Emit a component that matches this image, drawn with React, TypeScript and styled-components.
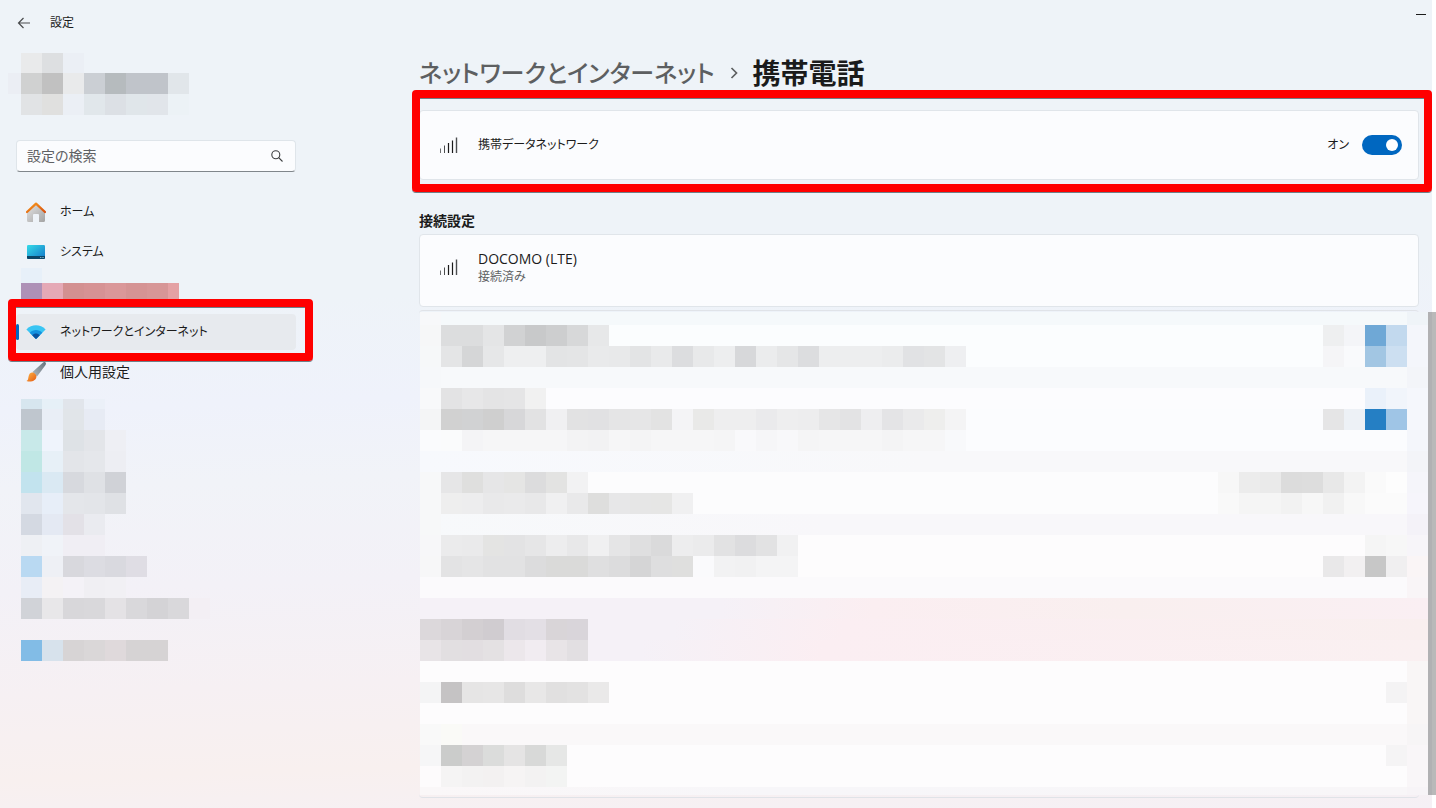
import React from "react";
import styled, { createGlobalStyle } from "styled-components";

const GlobalStyle = createGlobalStyle`
  *, *::before, *::after { box-sizing: border-box; }
  body {
    margin: 0;
    background: #ffffff;
    color: #1b1b1b;
    font-family: "Open Sans", "Noto Sans CJK JP", sans-serif;
    font-size: 14px;
    line-height: 20px;
    font-feature-settings: "palt";
  }
  button, input { font: inherit; color: inherit; font-feature-settings: inherit; }
`;

const Page = styled.div`
  position: relative;
  min-height: 100vh;
  padding-right: 4px;
`;

const Window = styled.div`
  min-height: 100vh;
  display: flex;
  flex-direction: column;
  background: linear-gradient(
    178deg,
    #eef3f8 0%,
    #eef3f8 36%,
    #eff2fb 48%,
    #f1f3f8 57%,
    #f3f1f7 69%,
    #f6f0f3 81%,
    #f8f0ef 91%,
    #f5f0f5 100%
  );
`;

const TitleBar = styled.header`
  display: flex;
  align-items: center;
  height: 46px;
  padding: 0 6px 0 16px;
  font-size: 12px;
`;

const BareButton = styled.button`
  display: flex;
  align-items: center;
  justify-content: center;
  padding: 0;
  border: 0;
  background: none;
`;

const BackButton = styled(BareButton)`
  width: 16px;
  height: 16px;
  margin-right: 18px;
`;

const MinimizeButton = styled(BareButton)`
  align-self: flex-start;
  width: 10px;
  height: 28px;
  margin-left: auto;
`;

const Columns = styled.div`
  flex: 1;
  display: grid;
  grid-template-columns: 403px minmax(0, 1fr);
  padding-left: 16px;
`;

const Sidebar = styled.aside`
  width: 280px;
  padding-top: 7px;
`;

const SearchBox = styled.label`
  display: flex;
  align-items: center;
  height: 32px;
  margin: 25px 0 22px;
  padding: 0 12px 0 10px;
  border: 1px solid #dfe5ea;
  border-bottom-color: #80868b;
  border-radius: 4px;
  background: #fbfcfe;
`;

const SearchInput = styled.input`
  flex: 1;
  min-width: 0;
  padding: 0;
  border: 0;
  outline: 0;
  background: none;
  &::placeholder { color: #5f6164; opacity: 1; }
`;

const NavList = styled.nav`
  display: flex;
  flex-direction: column;
  gap: 4px;
`;

const NavSlot = styled.div`
  position: relative;
`;

const NavLink = styled.a<{ $active?: boolean; $kana?: boolean }>`
  position: relative;
  display: flex;
  align-items: center;
  gap: 14px;
  height: 36px;
  padding-left: 10px;
  border-radius: 4px;
  background: ${(p) => (p.$active ? "#e7eaee" : "transparent")};
  color: inherit;
  font-size: ${(p) => (p.$kana ? 12 : 14)}px;
  line-height: ${(p) => (p.$kana ? 22 : 20)}px;
  text-decoration: none;
  &::before {
    content: "";
    display: ${(p) => (p.$active ? "block" : "none")};
    position: absolute;
    left: 0;
    top: 10px;
    width: 3px;
    height: 16px;
    border-radius: 2px;
    background: #0067c0;
  }
`;

const Highlight = styled.div<{ $inset: string }>`
  position: absolute;
  inset: ${(p) => p.$inset};
  border: 8px solid #ff0000;
  border-radius: 4px;
  box-shadow: inset 0 1px 0 #6f7f88, 0 1px 0 #6f7f88;
  pointer-events: none;
`;

const Main = styled.main`
  padding: 10px 13px 10px 0;
`;

const Breadcrumb = styled.h1`
  display: flex;
  align-items: center;
  gap: 15px;
  height: 34px;
  margin: 0 0 20px;
  font-size: 28px;
  line-height: 34px;
  font-weight: 700;
  white-space: nowrap;
`;

const ParentLink = styled.a`
  color: #5d5f61;
  font-size: 24px;
  font-weight: 500;
  text-decoration: none;
`;

const CardWrap = styled.div`
  position: relative;
`;

const Card = styled.section<{ $height: number; $raised?: boolean }>`
  display: flex;
  align-items: center;
  gap: 20px;
  min-height: ${(p) => p.$height}px;
  padding: 0 16px ${(p) => (p.$raised ? 8 : 0)}px 20px;
  border: 1px solid #e0e5ea;
  border-radius: 4px;
  background: #fbfcfe;
`;

const CardText = styled.div`
  flex: 1;
`;

const CardTitle = styled.div<{ $kana?: boolean }>`
  font-size: ${(p) => (p.$kana ? 12 : 14)}px;
  line-height: 20px;
`;

const CardNote = styled.div`
  color: #616365;
  font-size: 12px;
  line-height: 16px;
`;

const ToggleLabel = styled.label`
  display: flex;
  align-items: center;
  gap: 13px;
  font-size: 12px;
`;

const Toggle = styled.input`
  appearance: none;
  position: relative;
  width: 40px;
  height: 20px;
  margin: 0;
  border-radius: 10px;
  background: #0067c0;
  &::after {
    content: "";
    position: absolute;
    top: 4px;
    right: 4px;
    width: 12px;
    height: 12px;
    border-radius: 50%;
    background: #ffffff;
  }
`;

const SectionTitle = styled.h2`
  margin: 31px 0 3px;
  font-size: 14px;
  line-height: 20px;
  font-weight: 600;
`;

const ListCard = styled.section`
  margin-top: 3px;
  padding: 1px 0 2px 1px;
  border: solid #e0e3e8;
  border-width: 1px 0;
  border-radius: 4px;
`;

const Bleed = styled.div`
  margin-right: -9px;
`;

const MosaicRow = styled.div<{ $height?: number; $fill?: string }>`
  display: flex;
  height: ${(p) => p.$height ?? 21}px;
  background: ${(p) => p.$fill ?? "transparent"};
`;

const Cell = styled.span<{ $color: string; $width?: number }>`
  flex: none;
  width: ${(p) => p.$width ?? 21}px;
  background: ${(p) => (p.$color === "-" ? "transparent" : `#${p.$color}`)};
`;

const Spacer = styled.span`
  flex: 1;
`;

const SideMosaic = styled.div<{ $top?: number; $bottom?: number }>`
  margin: ${(p) => p.$top ?? 0}px 0 ${(p) => p.$bottom ?? 0}px 5px;
`;

const ProfileMosaic = styled.div`
  margin-left: -8px;
`;

const ScrollThumb = styled.div`
  position: absolute;
  top: 312px;
  right: 0;
  bottom: 13px;
  width: 8px;
  background: linear-gradient(90deg, #b1b1b3 4px, #b9b9b9 4px);
`;

type RowData = { h?: number; fill?: string; left?: string; right?: string; edge?: string };

function Cells({ colors }: { colors?: string }) {
  if (!colors) return null;
  return (
    <>
      {colors.split(" ").map((color, i) => (
        <Cell key={i} $color={color} />
      ))}
    </>
  );
}

function SideRows({ rows }: { rows: RowData[] }) {
  return (
    <>
      {rows.map((row, i) => (
        <MosaicRow key={i} $height={row.h}>
          <Cells colors={row.left} />
        </MosaicRow>
      ))}
    </>
  );
}

const profileRows: RowData[] = [
  { h: 20, left: "e9eaeb dddfe1 ebeff5" },
  { left: "d0d1d1 c1c1c1 e9eaeb cbcfd4 b6bbbe c0c4ca c0c4ca e1e6ea" },
  { left: "e1e3e5 e0e0df ebeff5 e1e7eb dce0e5 e0e6ea e1e5ea ecf2f6" },
];

const sidebarRows: RowData[] = [
  { h: 10, left: "d7e6ef e6f0f7 e1e5eb ebf0f8" },
  { left: "bfc6ce e9eef6 e1e5e9 e7ebf4" },
  { left: "c8e9e9 eff4fc dee2e6 e3e5e9 eeeff4" },
  { left: "c0e7e5 e7f0f7 e3e5e9 e5e7eb edeef3" },
  { left: "c2e3ee dae9f3 d7d9de dfe1e5 d0d2d7" },
  { left: "e1e6ee e7eef8 e4e6ea e3e5e9 dfe1e5" },
  { left: "d4d9e2 e4e9f3 e3e1e7 eaebf0" },
  { left: "eef0f4 f0f3f8 f0eef4 f0eef4" },
  { left: "b9d9f2 eef0f5 d8d8dd dcdce2 d9d9df dfdde4" },
  { left: "e8edf6 f4f2f4 f4f2f7 f0eff3 f1f0f4" },
  { left: "d1d3d8 e8e7e9 d8d7da d9d8db e4e2e5 d9d8db d4d3d6 d9d8db f3eff4" },
  { left: "" },
  { left: "82bce6 d7e2ec d7d4d5 dad7d8 dfd9db d6d3d4 d6d3d4" },
];

const settingRows: RowData[] = [
  { h: 13, fill: "#f5f9fb", left: "f7f8fa", edge: "eff4f8" },
  {
    fill: "#fbfdfe",
    left: "f6f7f8 dcddde dcddde e4e5e6 d1d2d3 c8c9ca cdcecf d7d8d9 e7e8e9",
    right: "eeeff0 f4f5f8 6fa8d6 c2d9ee",
    edge: "f4f6fb",
  },
  {
    fill: "#fbfdfe",
    left: "f6f8f9 e4e5e6 d5d6d7 e6e7e8 eeeff0 eeeff0 e3e4e5 e4e5e6 e9eaeb e8e9ea e3e4e5 e9eaeb dcdddf e8e9ea edeeef d7d8da ebeced e5e6e7 dcdddf edeeef edeeef edeeef ebeced e1e2e4 e3e4e5 eeeff1",
    right: "f5f5f7 f9fafc a2c6e3 ccdff1",
    edge: "f4f6fb",
  },
  { fill: "#f7f9fb", left: "f6f8fa", edge: "f3f5f9" },
  { fill: "#fcfcfe", left: "f8f9fa e3e3e4 e7e7e8 e4e4e5 e5e5e6 f1f1f1", right: "eaf1fa f1f5fb", edge: "f5f7fc" },
  {
    fill: "#fbfcfe",
    left: "f4f5f6 d1d1d1 d1d2d3 cfcfcf d7d7d9 e2e2e3 f0f0f2 e2e2e3 e1e1e3 e5e5e6 e6e6e7 e3e3e3 f4f4f6 e9e9e8 eeeeef eeeeef eaeaec eeeeef ededee e6e6e7 e3e3e4 eeeef0 e4e4e6 eaeaeb eeeeed f4f4f5",
    right: "e5e5e6 edf1f6 257fc4 9fc5e6",
    edge: "f5f7fc",
  },
  {
    fill: "#fbfcfe",
    left: "fafbfd fafbfc f4f4f6 f6f6f7 f6f6f7 f6f6f7 f6f6f7 f3f3f4 f2f2f3 f6f6f7 f4f4f5 f6f6f7 f6f6f7 f6f6f7 f5f5f6 f9f9fb f6f6f8 f8f8fa f5f5f6 f6f6f7 f6f6f7 f6f6f7 f4f4f5 f6f6f7 f6f6f7 f8f9fb",
    edge: "f4f6fb",
  },
  { fill: "linear-gradient(90deg, #f7f9fd, #f8f8fa 50%)", edge: "f3f4f8" },
  {
    fill: "#fcfcfd",
    left: "f7f8f9 e6e6e7 dfdfde e6e6e7 e5e5e4 dcdcdd e3e3e2 f2f2f3",
    right: "f7f7f7 ececec eaeaea dcdcdc dddddd e8e8e8 f3f3f3 fafafa fdfdfd",
    edge: "f5f5fa",
  },
  {
    fill: "#fcfcfd",
    left: "f7f8f9 eeeeee ededee e9e9ea eaeaeb e8e8e9 f0f0f1 e9e9ea dededd e7e7e8 e6e6e6 e6e6e5 f0f0f1",
    right: "f9f9f9 f5f5f5 f5f5f5 f2f2f2 f7f7f7 f1f1f1 f8f8f8 fbfbfb fbfbfb",
    edge: "f6f5fb",
  },
  { fill: "linear-gradient(90deg, #f7f9fb, #f8f7fa 40%)", left: "f7f8f9", edge: "f4f2f8" },
  {
    fill: "#fdfcfd",
    left: "f7f7f9 ebebec eaeaeb e4e4e3 e3e3e4 e6e6e7 ededee e8e8e9 f0f0f1 e5e5e6 dfdfe0 dadadb ededee ebebec e2e2e3 dcdcde e2e2e3 f1f1f2",
    right: "f5f5f5 f7f7f7",
    edge: "f7f5f9",
  },
  {
    fill: "#fdfcfd",
    left: "f7f7f8 e3e3e4 e5e5e6 e2e2e3 e2e2e3 dcdcdd dadad9 dadad9 dfdfe0 dcdcdd d5d5d6 dededf dfdfde fafafc f2f2f3 f1f1f2 f4f4f5 f4f4f5",
    right: "e9e8e9 f2f0f1 c7c7c7 f0eff0",
    edge: "faf5f6",
  },
  { fill: "#fbfafc", edge: "f9f5f7" },
  { fill: "linear-gradient(90deg, #f5f1f7 30%, #fbeef1 45%, #f9efef 70%, #faeff3)" },
  {
    fill: "linear-gradient(90deg, #f5f1f7 25%, #fbeef2 42%, #f9efef)",
    left: "dcd8db d8d4d7 d3cfd2 d0ccd0 e1dde3 e3dfe5 d9d5d8 d9d5da",
  },
  {
    fill: "linear-gradient(90deg, #f5f1f7 22%, #fbeef2 40%, #faf0f1)",
    left: "e8e4e7 e2dfe1 e2dee1 e4e1e3 ece7eb f1ecf1 e8e4e7 e2dfe2",
  },
  { fill: "#fdfcfd", edge: "f9f6f6" },
  { fill: "#fdfcfd", left: "f4f4f5 c5c3c4 e6e5e5 e7e6e6 dedddd e8e7e7 e1e0e0 e3e2e2 eae9e9", right: "f4f3f4", edge: "f9f6f6" },
  { fill: "#fdfcfd", edge: "f9f6f6" },
  { fill: "#faf8f9", left: "f9f9f9 fafaf7", edge: "f7f5f6" },
  { fill: "#fdfcfd", left: "f6f6f7 cbcccb d4d2d3 dbdcdb e5e4e4 d8d9d8 e6e7e6", right: "f5f4f5", edge: "f9f6f8" },
  { fill: "#fdfcfd", left: "fdfbfc f5f4f4 f3f2f2 f3f1f1 f6f4f4 f3f2f2 f3f4f3", edge: "f9f6f8" },
  { h: 8, fill: "linear-gradient(90deg, #faf7f8, #f7f6f9 35%, #f8f6f8)", edge: "f7f4f7" },
];

function SettingRow({ h, fill, left, right, edge }: RowData) {
  return (
    <MosaicRow $height={h} $fill={fill}>
      <Cells colors={left} />
      <Spacer />
      <Cells colors={right} />
      <Cell $color={edge ?? "-"} />
    </MosaicRow>
  );
}

function SignalIcon() {
  return (
    <svg width="18" height="16" viewBox="0 0 18 16" aria-hidden="true">
      <path d="M.5 11.500V16" stroke="#6c6e70" />
      <path d="M4.500 8.500V16" stroke="#4c4e50" />
      <path d="M8.500 6v10M12.500 3.500V16" stroke="#1b1b1b" strokeWidth="1.200" />
      <path d="M16.500.5V16" stroke="#4c4e50" strokeWidth="1.400" />
    </svg>
  );
}

function HomeIcon() {
  return (
    <svg width="20" height="20" viewBox="0 0 20 20" aria-hidden="true">
      <defs>
        <linearGradient id="homeWall" x1="0" y1="0" x2="1" y2="1">
          <stop offset="0" stopColor="#e4e4e4" />
          <stop offset="1" stopColor="#a3a3a3" />
        </linearGradient>
        <linearGradient id="homeRoof" x1="0" y1="0" x2="1" y2="1">
          <stop offset="0" stopColor="#f99a1c" />
          <stop offset="1" stopColor="#d8500f" />
        </linearGradient>
      </defs>
      <path d="M1 9.500 10 1.500l9 8V18.500a1.500 1.500 0 0 1-1.500 1.500H13v-7a1 1 0 0 0-1-1H8a1 1 0 0 0-1 1v7H2.500A1.500 1.500 0 0 1 1 18.500z" fill="url(#homeWall)" />
      <path d="M1 10 10 1.700 19 10" fill="none" stroke="url(#homeRoof)" strokeWidth="2.300" strokeLinecap="round" strokeLinejoin="round" />
    </svg>
  );
}

function SystemIcon() {
  return (
    <svg width="20" height="20" viewBox="0 0 20 20" aria-hidden="true">
      <defs>
        <linearGradient id="screen" x1="0" y1="0" x2="1" y2="1">
          <stop offset="0" stopColor="#35dbe8" />
          <stop offset="1" stopColor="#1276c8" />
        </linearGradient>
      </defs>
      <rect x="1" y="3" width="18" height="14" rx="1.200" fill="url(#screen)" />
      <path d="M1 14h18v1.800a1.200 1.200 0 0 1-1.200 1.200H2.200A1.200 1.200 0 0 1 1 15.800z" fill="#0b4567" />
      <path d="M14.300 15.500h1M16.500 15.500h1" stroke="#a8dcf0" />
    </svg>
  );
}

function NetworkIcon() {
  return (
    <svg width="20" height="20" viewBox="0 0 20 20" aria-hidden="true">
      <path d="M.4 7.400C5.700 1.900 14.300 1.900 19.600 7.400L10 17z" fill="#39c5f3" />
      <path d="M3.700 10.700c3.500-3.600 9.100-3.600 12.600 0L10 17z" fill="#1592df" />
      <path d="M6.200 13.200c2.100-2.200 5.500-2.200 7.600 0L10.700 16.500a1 1 0 0 1-1.400 0z" fill="#0a529e" />
    </svg>
  );
}

function BrushIcon() {
  return (
    <svg width="20" height="20" viewBox="0 0 20 20" aria-hidden="true">
      <defs>
        <linearGradient id="handle" x1="1" y1="0" x2="0" y2="1">
          <stop offset="0" stopColor="#65727c" />
          <stop offset="1" stopColor="#b2babf" />
        </linearGradient>
        <linearGradient id="bristle" x1="0" y1="0" x2="1" y2="1">
          <stop offset="0" stopColor="#ffb545" />
          <stop offset="1" stopColor="#e45a12" />
        </linearGradient>
      </defs>
      <path d="M19.500.5c.8.8.4 2-.3 3L11 14.500 6.500 10 16.500.9c1-.8 2.300-1.100 3-.4z" fill="url(#handle)" />
      <path d="M5.800 10.500c2.300-.3 4.900 2.100 4.600 4.500-.5 3.700-5.600 5.700-9.900 4 1.800-.8 1.500-2.100 2-4.300.4-2.200 1.400-4 3.300-4.200z" fill="url(#bristle)" />
    </svg>
  );
}

export default function App() {
  return (
    <Page>
      <GlobalStyle />
      <Window>
        <TitleBar>
          <BackButton aria-label="戻る">
            <svg width="14" height="12" viewBox="0 0 14 12" fill="none" stroke="#4a4c4e" strokeWidth="1.200">
              <path d="M13 6H1.500M6.500 1l-5 5 5 5" />
            </svg>
          </BackButton>
          設定
          <MinimizeButton aria-label="最小化">
            <svg width="10" height="1" viewBox="0 0 10 1">
              <path d="M0 .5h10" stroke="#1b1b1b" />
            </svg>
          </MinimizeButton>
        </TitleBar>
        <Columns>
          <Sidebar>
            <ProfileMosaic>
              {profileRows.map((row, i) => (
                <MosaicRow key={i} $height={row.h}>
                  <Cell $color={i === 1 ? "ebeef4" : "-"} $width={13} />
                  <Cells colors={row.left} />
                </MosaicRow>
              ))}
            </ProfileMosaic>
            <SearchBox>
              <SearchInput type="text" placeholder="設定の検索" aria-label="設定の検索" />
              <svg width="12" height="12" viewBox="0 0 12 12" fill="none" stroke="#3c3e40" strokeWidth="1.100" aria-hidden="true">
                <circle cx="4.800" cy="4.800" r="4" />
                <path d="m7.700 7.700 3.800 3.800" />
              </svg>
            </SearchBox>
            <NavList>
              <NavLink href="#home" $kana><HomeIcon />ホーム</NavLink>
              <NavLink href="#system" $kana><SystemIcon />システム</NavLink>
              <SideMosaic $top={-6} $bottom={11}>
                <MosaicRow $height={15}><Cell $color="e7f0f9" /></MosaicRow>
                <MosaicRow $height={16}>
                  <Cells colors="ae91b7 e5a9b6 d39091 d69294 da9799 d59394 d79697" />
                  <Cell $color="e4a1a4" $width={11} />
                </MosaicRow>
              </SideMosaic>
              <NavSlot>
                <NavLink href="#network" $active $kana><NetworkIcon />ネットワークとインターネット</NavLink>
                <Highlight $inset="-15px -17px -11px -8px" />
              </NavSlot>
              <NavLink href="#personalization"><BrushIcon />個人用設定</NavLink>
            </NavList>
            <SideMosaic $top={9}>
              <SideRows rows={sidebarRows} />
            </SideMosaic>
          </Sidebar>
          <Main>
            <Breadcrumb>
              <ParentLink href="#network">ネットワークとインターネット</ParentLink>
              <svg width="8" height="12" viewBox="0 0 8 12" fill="none" stroke="#5d5f61" strokeWidth="1.700" aria-hidden="true">
                <path d="m1.500 1 5 5-5 5" />
              </svg>
              <span>携帯電話</span>
            </Breadcrumb>
            <CardWrap>
              <Card $height={70}>
                <SignalIcon />
                <CardText>
                  <CardTitle $kana>携帯データネットワーク</CardTitle>
                </CardText>
                <ToggleLabel>
                  オン
                  <Toggle type="checkbox" role="switch" defaultChecked />
                </ToggleLabel>
              </Card>
              <Highlight $inset="-20px -13px -12px -7px" />
            </CardWrap>
            <SectionTitle>接続設定</SectionTitle>
            <Card $height={73} $raised>
              <SignalIcon />
              <CardText>
                <CardTitle>DOCOMO (LTE)</CardTitle>
                <CardNote>接続済み</CardNote>
              </CardText>
            </Card>
            <ListCard>
              <Bleed>
                {settingRows.map((row, i) => (
                  <SettingRow key={i} {...row} />
                ))}
              </Bleed>
            </ListCard>
          </Main>
        </Columns>
      </Window>
      <ScrollThumb />
    </Page>
  );
}
